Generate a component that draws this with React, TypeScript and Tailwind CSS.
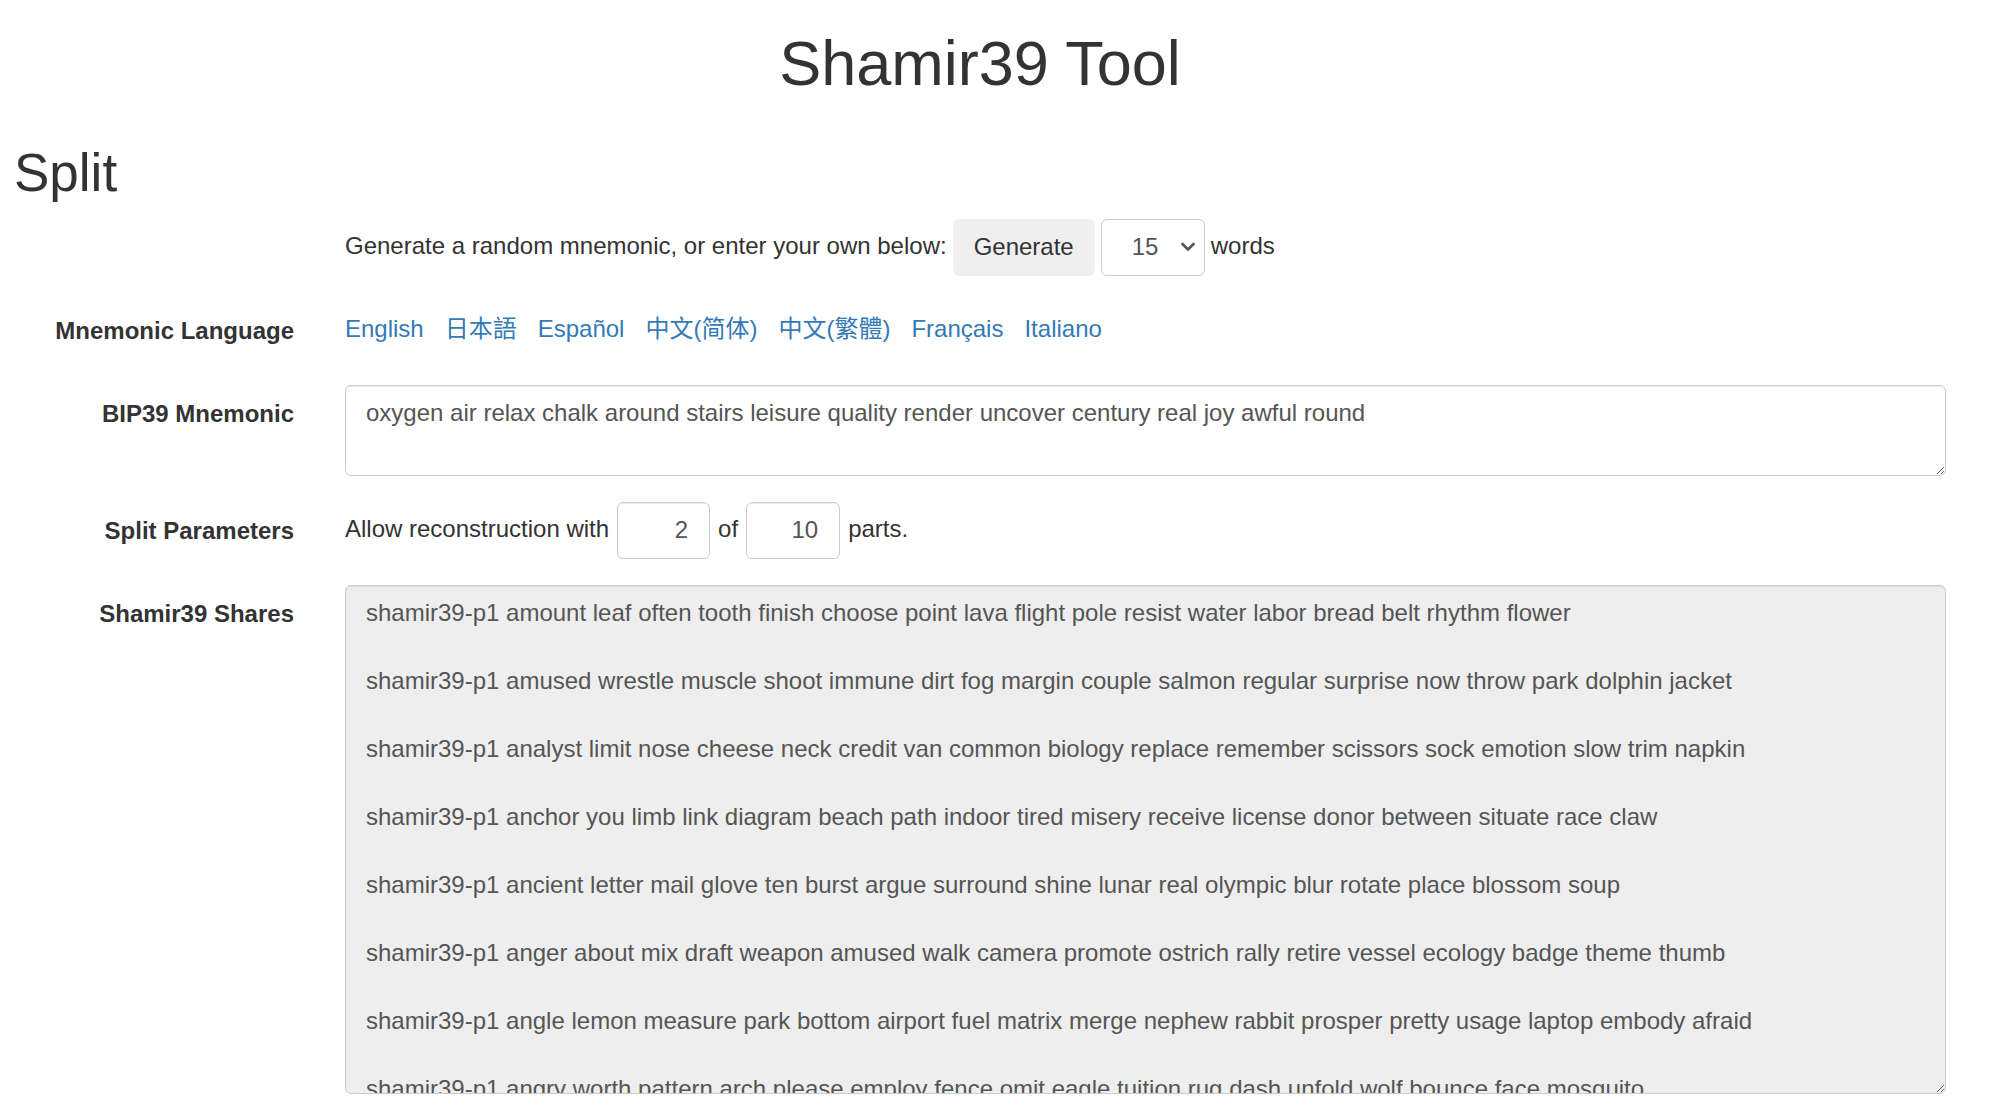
// Shamir39 split tool page

import React from 'react';

const languages = ['English', '日本語', 'Español', '中文(简体)', '中文(繁體)', 'Français', 'Italiano'];

const shares = [
  'shamir39-p1 amount leaf often tooth finish choose point lava flight pole resist water labor bread belt rhythm flower',
  'shamir39-p1 amused wrestle muscle shoot immune dirt fog margin couple salmon regular surprise now throw park dolphin jacket',
  'shamir39-p1 analyst limit nose cheese neck credit van common biology replace remember scissors sock emotion slow trim napkin',
  'shamir39-p1 anchor you limb link diagram beach path indoor tired misery receive license donor between situate race claw',
  'shamir39-p1 ancient letter mail glove ten burst argue surround shine lunar real olympic blur rotate place blossom soup',
  'shamir39-p1 anger about mix draft weapon amused walk camera promote ostrich rally retire vessel ecology badge theme thumb',
  'shamir39-p1 angle lemon measure park bottom airport fuel matrix merge nephew rabbit prosper pretty usage laptop embody afraid',
  'shamir39-p1 angry worth pattern arch please employ fence omit eagle tuition rug dash unfold wolf bounce face mosquito',
];

const Label: React.FC<{ children?: React.ReactNode }> = ({ children }) => (
  <div className="pt-[12px] text-right font-bold">{children}</div>
);

export default function App() {
  return (
    <div className="w-[1960px] px-[14px] pb-[40px] bg-white text-[#333] text-[24px] leading-[1.42857] font-['Liberation_Sans','Noto_Sans_CJK_SC',Arial,sans-serif]">
      <h1 className="mt-[29px] text-center text-[63px] leading-[1.1]">Shamir39 Tool</h1>

      <h2 className="mt-[46px] mb-[17px] text-[53px] leading-[1.1]">Split</h2>

      <div className="grid grid-cols-[280px_1fr] gap-x-[51px] gap-y-[26px]">
        <div />
        <div className="flex items-center h-[57px] gap-[6px] -mt-[1px]">
          <span className="-mt-[2px]">Generate a random mnemonic, or enter your own below:</span>
          <button className="h-[57px] px-[21px] rounded-[6px] bg-[#efefef] text-[#333]">Generate</button>
          <div className="flex items-center justify-between h-[57px] w-[104px] pl-[30px] pr-[9px] border border-[#ccc] rounded-[6px] bg-white text-[#555]">
            <span>15</span>
            <svg width="14" height="10" viewBox="0 0 14 10" fill="none">
              <path d="M1.5 2 L7 7.5 L12.5 2" stroke="#555" strokeWidth="2.6" strokeLinecap="round" strokeLinejoin="round" />
            </svg>
          </div>
          <span className="-mt-[2px]">words</span>
        </div>

        <Label>Mnemonic Language</Label>
        <div className="flex items-start gap-[21px] pt-[10px] min-h-[57px] text-[#337ab7]">
          {languages.map((lang) => (
            <a key={lang} href="#" className="hover:underline">{lang}</a>
          ))}
        </div>

        <Label>BIP39 Mnemonic</Label>
        <textarea
          readOnly
          rows={2}
          defaultValue="oxygen air relax chalk around stairs leisure quality render uncover century real joy awful round"
          className="block w-full h-[91px] px-[20px] py-[10px] border border-[#ccc] rounded-[6px] bg-white text-[#555] leading-[1.42857] shadow-[inset_0_1px_1px_rgba(0,0,0,0.075)] overflow-hidden resize-y outline-none"
        />

        <Label>Split Parameters</Label>
        <div className="flex items-center h-[57px] gap-[8px]">
          <span className="-mt-[2px]">Allow reconstruction with</span>
          <input
            readOnly
            value="2"
            className="h-[57px] w-[93px] px-[21px] text-right border border-[#ccc] rounded-[6px] text-[#555] shadow-[inset_0_1px_1px_rgba(0,0,0,0.075)] outline-none"
          />
          <span className="-mt-[2px]">of</span>
          <input
            readOnly
            value="10"
            className="h-[57px] w-[94px] px-[21px] text-right border border-[#ccc] rounded-[6px] text-[#555] shadow-[inset_0_1px_1px_rgba(0,0,0,0.075)] outline-none"
          />
          <span className="-mt-[2px]">parts.</span>
        </div>

        <Label>Shamir39 Shares</Label>
        <textarea
          readOnly
          defaultValue={shares.join('\n\n')}
          className="block w-full h-[509px] px-[20px] py-[10px] border border-[#ccc] rounded-[6px] bg-[#eee] text-[#555] leading-[34px] whitespace-pre shadow-[inset_0_1px_1px_rgba(0,0,0,0.075)] overflow-hidden resize-y outline-none"
        />
      </div>
    </div>
  );
}
